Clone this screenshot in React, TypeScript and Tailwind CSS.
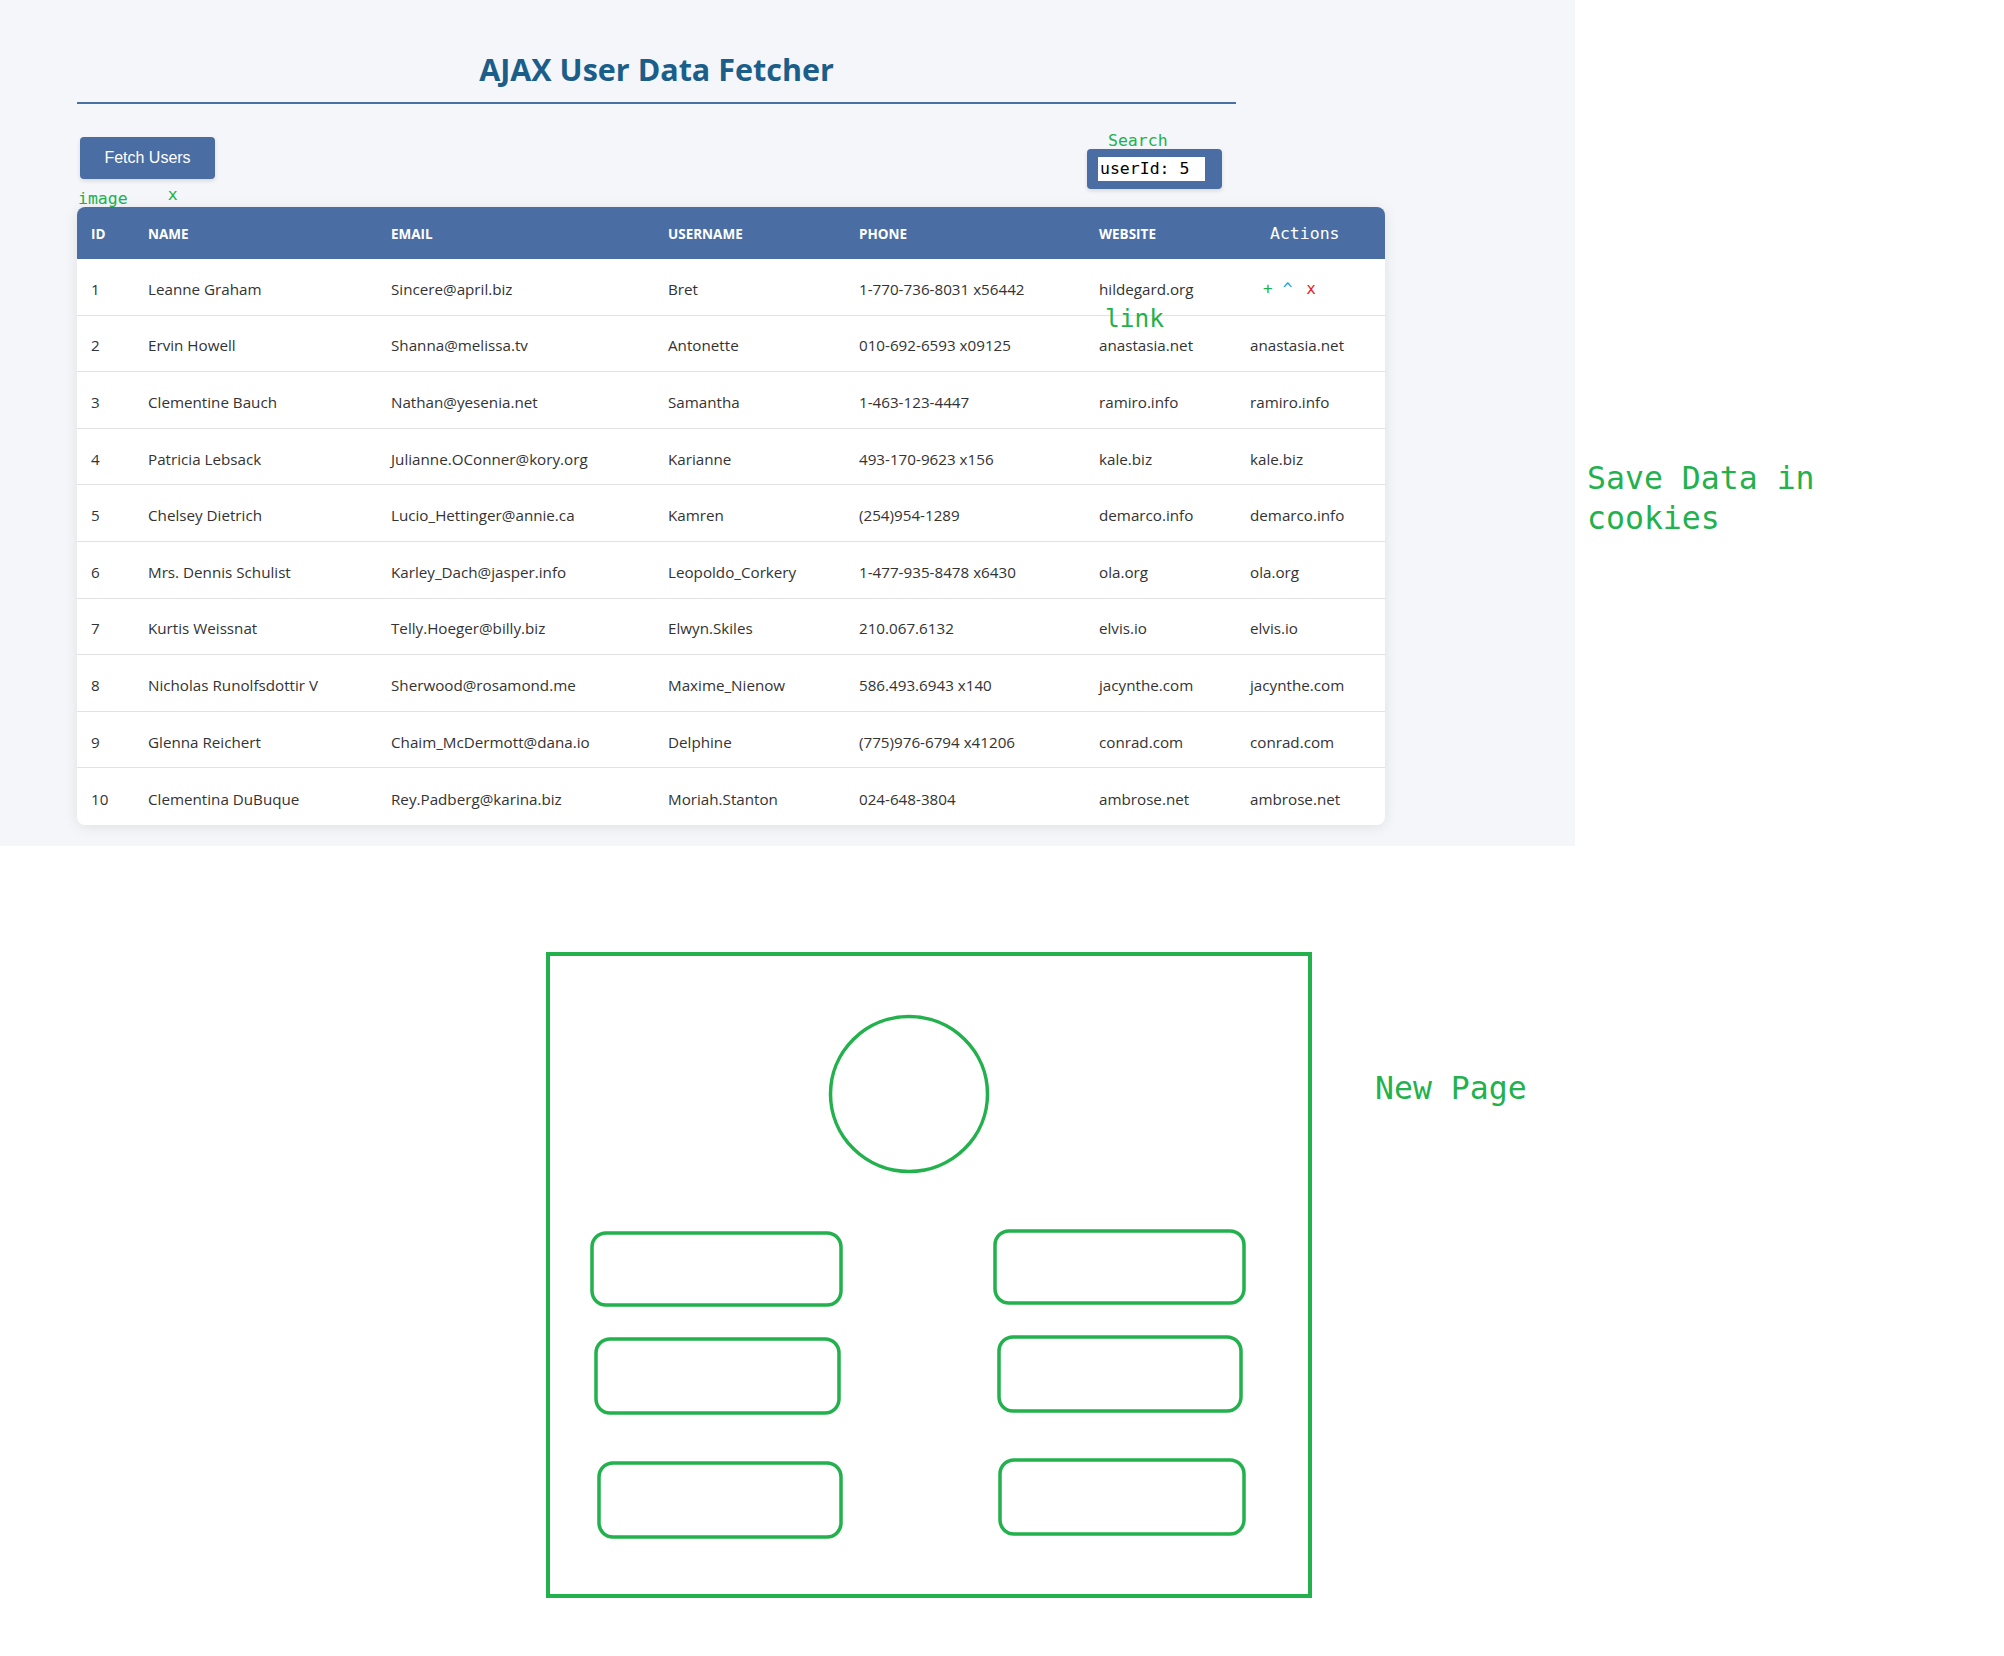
import React from "react";

const users = [
  ["1", "Leanne Graham", "Sincere@april.biz", "Bret", "1-770-736-8031 x56442", "hildegard.org"],
  ["2", "Ervin Howell", "Shanna@melissa.tv", "Antonette", "010-692-6593 x09125", "anastasia.net"],
  ["3", "Clementine Bauch", "Nathan@yesenia.net", "Samantha", "1-463-123-4447", "ramiro.info"],
  ["4", "Patricia Lebsack", "Julianne.OConner@kory.org", "Karianne", "493-170-9623 x156", "kale.biz"],
  ["5", "Chelsey Dietrich", "Lucio_Hettinger@annie.ca", "Kamren", "(254)954-1289", "demarco.info"],
  ["6", "Mrs. Dennis Schulist", "Karley_Dach@jasper.info", "Leopoldo_Corkery", "1-477-935-8478 x6430", "ola.org"],
  ["7", "Kurtis Weissnat", "Telly.Hoeger@billy.biz", "Elwyn.Skiles", "210.067.6132", "elvis.io"],
  ["8", "Nicholas Runolfsdottir V", "Sherwood@rosamond.me", "Maxime_Nienow", "586.493.6943 x140", "jacynthe.com"],
  ["9", "Glenna Reichert", "Chaim_McDermott@dana.io", "Delphine", "(775)976-6794 x41206", "conrad.com"],
  ["10", "Clementina DuBuque", "Rey.Padberg@karina.biz", "Moriah.Stanton", "024-648-3804", "ambrose.net"],
];

const mono = "font-['DejaVu_Sans_Mono',monospace]";
const gridCols = "grid grid-cols-[56px_243px_277px_191px_240px_151px_150px] items-center";

export default function App() {
  return (
    <div className="w-[2004px] min-h-[1656px] bg-white">
      {/* top area */}
      <div className="flex">
        <div className="w-[1575px] h-[846px] bg-[#f4f6fa] pl-[77px]">
          {/* title */}
          <div className="w-[1159px] pt-[49px] pb-[13px] border-b-2 border-[#4a6fa5]">
            <h1 className="text-center text-[30.5px] leading-[40px] font-bold text-[#1b5e8a] font-['Open_Sans',sans-serif]">
              AJAX User Data Fetcher
            </h1>
          </div>
          {/* controls */}
          <div className="w-[1159px] mt-[28px] flex justify-between items-start">
            <button className="mt-[5px] ml-[3px] w-[135px] h-[42px] rounded-[4px] bg-[#4a6da3] text-white text-[16px] font-['Liberation_Sans',Arial,sans-serif] shadow-[0_2px_4px_rgba(0,0,0,0.12)]">
              Fetch Users
            </button>
            <div className="mr-[14px] flex flex-col">
              <div className={`${mono} text-[16.5px] leading-[17px] h-[17px] pl-[21px] text-[#22b14c]`}>Search</div>
              <div className="w-[135px] h-[40px] rounded-[4px] bg-[#4a6da3] flex items-center pl-[11px] shadow-[0_2px_4px_rgba(0,0,0,0.12)]">
                <div className={`w-[107px] h-[24px] bg-white ${mono} text-[16.5px] leading-[24px] pl-[2px] text-black`}>
                  userId: 5
                </div>
              </div>
            </div>
          </div>
          {/* image annotation */}
          <div className={`h-[18px] flex items-start ${mono} text-[16.5px] leading-[18px] text-[#22b14c]`}>
            <span className="ml-[1px] mt-[1px]">image</span>
            <span className="ml-[40px] -mt-[3px]">x</span>
          </div>
          {/* table */}
          <div className="relative w-[1308px] rounded-lg bg-white shadow-[0_2px_14px_rgba(0,0,0,0.09)] font-['Open_Sans',sans-serif]">
            <div className={`${gridCols} h-[52px] pt-[2px] bg-[#4a6ea3] rounded-t-lg text-white`}>
              <div className="pl-[14px] text-[13.5px] font-bold">ID</div>
              <div className="pl-[15px] text-[13.5px] font-bold">NAME</div>
              <div className="pl-[15px] text-[13.5px] font-bold">EMAIL</div>
              <div className="pl-[15px] text-[13.5px] font-bold">USERNAME</div>
              <div className="pl-[15px] text-[13.5px] font-bold">PHONE</div>
              <div className="pl-[15px] text-[13.5px] font-bold">WEBSITE</div>
              <div className={`pl-[35px] ${mono} text-[16.5px] text-white`}>Actions</div>
            </div>
            {users.map((u, i) => (
              <div
                key={u[0]}
                className={`${gridCols} h-[56.6px] pt-[5px] text-[15.2px] text-[#333333] ${i < users.length - 1 ? "border-b border-[#e2e2e2]" : ""}`}
              >
                <div className="pl-[14px]">{u[0]}</div>
                <div className="pl-[15px]">{u[1]}</div>
                <div className="pl-[15px]">{u[2]}</div>
                <div className="pl-[15px]">{u[3]}</div>
                <div className="pl-[15px]">{u[4]}</div>
                <div className="pl-[15px]">{u[5]}</div>
                {i === 0 ? (
                  <div className={`pl-[28px] flex items-center ${mono} text-[16px]`}>
                    <span className="text-[#22b14c]">+</span>
                    <span className="ml-[10px] text-[#00a2e8]">^</span>
                    <span className="ml-[14px] text-[#ed1c24]">x</span>
                  </div>
                ) : (
                  <div className="pl-[15px]">{u[5]}</div>
                )}
              </div>
            ))}
            <div className={`absolute left-[1028px] top-[100px] ${mono} text-[24.5px] leading-[24.5px] text-[#22b14c]`}>link</div>
          </div>
        </div>
        <div className={`pl-[12px] pt-[458px] ${mono} text-[31.5px] leading-[40px] text-[#22b14c]`}>
          Save Data in
          <br />
          cookies
        </div>
      </div>

      {/* wireframe sketch */}
      <div className="flex mt-[105px] pl-[545px]">
        <svg width="770" height="650" viewBox="0 0 770 650" fill="none" stroke="#22b14c">
          <rect x="3" y="3" width="762" height="642" strokeWidth="4" />
          <ellipse cx="364" cy="143" rx="78.5" ry="77.5" strokeWidth="3.5" />
          <rect x="47" y="282" width="249" height="72" rx="14" strokeWidth="3.5" />
          <rect x="450" y="280" width="249" height="72" rx="14" strokeWidth="3.5" />
          <rect x="51" y="388" width="243" height="74" rx="14" strokeWidth="3.5" />
          <rect x="454" y="386" width="242" height="74" rx="14" strokeWidth="3.5" />
          <rect x="54" y="512" width="242" height="74" rx="14" strokeWidth="3.5" />
          <rect x="455" y="509" width="244" height="74" rx="14" strokeWidth="3.5" />
        </svg>
        <div className={`ml-[60px] mt-[117px] ${mono} text-[31.5px] leading-[40px] text-[#22b14c] whitespace-nowrap`}>
          New Page
        </div>
      </div>
    </div>
  );
}
